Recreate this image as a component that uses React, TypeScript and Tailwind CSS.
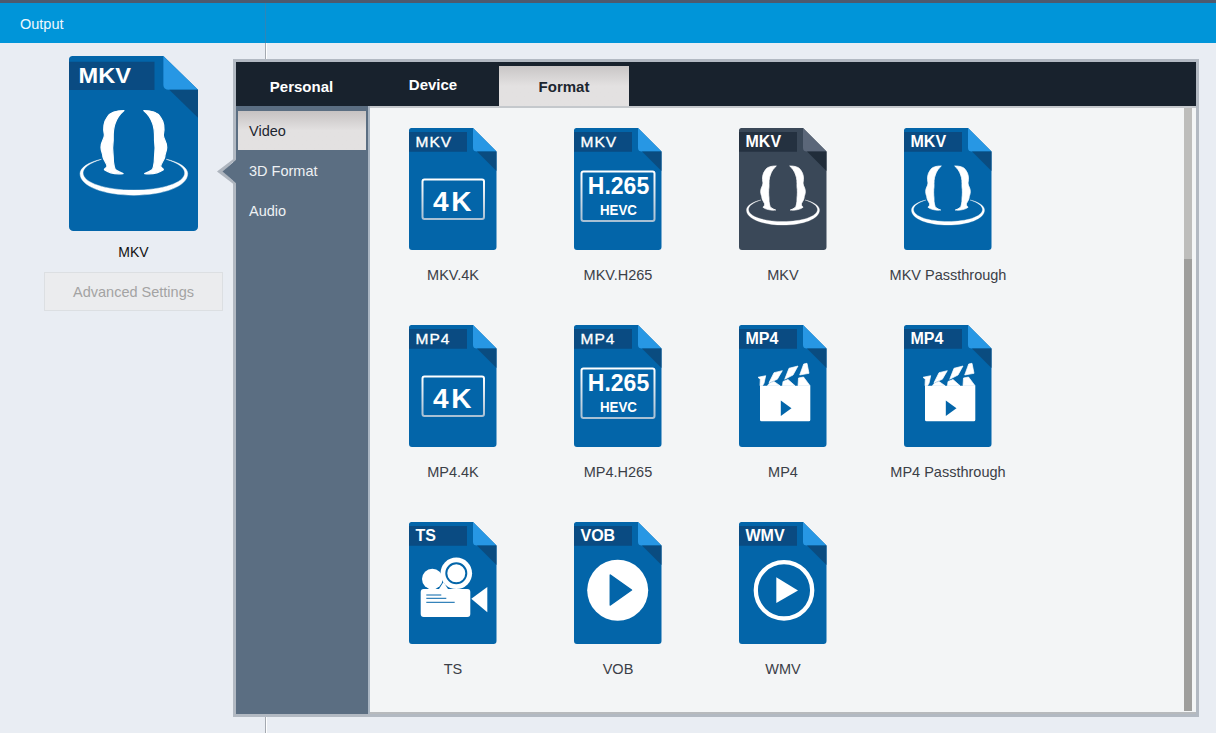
const formats = [
  { badge: 'MKV', glyph: '4k', label: 'MKV.4K', thin: true },
  { badge: 'MKV', glyph: 'h265', label: 'MKV.H265', thin: true },
  { badge: 'MKV', glyph: 'figures', label: 'MKV', dark: true },
  { badge: 'MKV', glyph: 'figures', label: 'MKV Passthrough' },
  { badge: 'MP4', glyph: '4k', label: 'MP4.4K', thin: true },
  { badge: 'MP4', glyph: 'h265', label: 'MP4.H265', thin: true },
  { badge: 'MP4', glyph: 'clapper', label: 'MP4' },
  { badge: 'MP4', glyph: 'clapper', label: 'MP4 Passthrough' },
  { badge: 'TS', glyph: 'camera', label: 'TS' },
  { badge: 'VOB', glyph: 'disc', label: 'VOB' },
  { badge: 'WMV', glyph: 'ring', label: 'WMV' },
];

const BLUE = { body: '#0365a9', badge: '#0a4b82', fold: '#2797e4', shade: '#0a4c80' };
const SLATE = { body: '#3a4858', badge: '#243140', fold: '#5b6779', shade: '#212d3a' };

const Glyph = ({ kind, fill }: { kind: string; fill: string }) => {
  if (kind === '4k') {
    return (
      <>
        <rect x="13.5" y="51.5" width="61.5" height="39.5" rx="2" fill="none" stroke="url(#box-fade)" strokeWidth="2" />
        <text x="44.5" y="82.5" textAnchor="middle" fontSize="28" fontWeight="700" letterSpacing="2.5" fill="#fff">4K</text>
      </>
    );
  }
  if (kind === 'h265') {
    return (
      <>
        <rect x="7.5" y="43.5" width="73" height="49.5" rx="2" fill="none" stroke="url(#box-fade)" strokeWidth="2" />
        <text x="44.5" y="66" textAnchor="middle" fontSize="23" fontWeight="700" fill="#fff">H.265</text>
        <text x="44.5" y="87" textAnchor="middle" fontSize="15" fontWeight="700" textLength="37" lengthAdjust="spacingAndGlyphs" fill="#fff">HEVC</text>
      </>
    );
  }
  if (kind === 'figures') {
    const half = 'M37.3 38 C32 38 28 39 26 42.5 C23.5 46 23 50 24 55 C24 58 21.5 60 21.7 63.7 C21.8 67 23 68 23 70.3 C23.5 73 26 75 25.7 77 C25 78.5 24 78.5 24 79.3 C27 81.5 32 82.5 36.7 82 C33 80.5 31 79.5 30.7 77 C30 74 30 73 30 70.3 C29.5 66 29.5 62 30 58.7 C30 54 29.8 51 31.3 47 C32.5 43 35 40 37.3 38 Z';
    return (
      <g fill="#fff" stroke="#fff" strokeWidth="0.8" strokeLinejoin="round">
        <path d={half} />
        <path d={half} transform="translate(88 0) scale(-1 1)" />
        <path d="M22 72 C13 74 7.5 78 7.5 82 C7.5 91 24 97 44 97 C64 97 80.5 91 80.5 82 C80.5 78 75 74 66 72 C74 74.5 78.5 78 78.5 81.5 C78.5 88.5 63 93.5 44 93.5 C25 93.5 9.5 88.5 9.5 81.5 C9.5 78 14 74.5 22 72 Z" strokeWidth="0.3" />
      </g>
    );
  }
  if (kind === 'clapper') {
    return (
      <>
        <g fill="#fff" stroke="#fff" strokeWidth="0.7" strokeLinejoin="round">
          <path d="M21 60.7 H71.3 V94.7 a1.5 1.5 0 0 1 -1.5 1.5 H22.5 a1.5 1.5 0 0 1 -1.5 -1.5 Z" strokeWidth="0" />
          <path d="M19 52.3 L26.7 50.7 L25 58.3 L23.5 60.7 H21 L21.3 54.3 Z" />
          <path d="M35 47.7 L43.3 45.7 L38.3 54.3 L30 57.7 Z" />
          <path d="M50 43.3 L59 41 L54 50 L45.7 54.3 Z" />
          <path d="M64.7 39 L68 38.3 L70 48.3 L60.7 50 Z" />
          <path d="M28.5 60.7 L30 58.5 L35 56.5 L41 60.7 Z" />
          <path d="M43.5 60.7 L44 56.5 L49 54.5 L56 60.7 Z" />
          <path d="M59 60.7 L59.5 53 L64.5 52 L71 60.7 Z" />
        </g>
        <path d="M41.8 75.5 L52.5 83.3 L41.8 91 Z" fill={fill} />
      </>
    );
  }
  if (kind === 'camera') {
    return (
      <>
        <circle cx="23.3" cy="57" r="10.3" fill="#fff" />
        <path d="M30 67 L34.5 60 L39 67 Z" fill="#fff" />
        <rect x="11.7" y="67" width="49.6" height="28" rx="3" fill="#fff" />
        <circle cx="47.3" cy="51.3" r="15.8" fill="#fff" />
        <circle cx="47.3" cy="51.3" r="10" fill="none" stroke={fill} strokeWidth="2" />
        <path d="M62.3 76.7 L78.3 65 V90.3 Z" fill="#fff" />
        <path d="M17.3 73 H32.3 M17.3 76.3 H37.3 M17.3 80.3 H45.7" stroke={fill} strokeWidth="1" />
      </>
    );
  }
  if (kind === 'disc') {
    return (
      <>
        <circle cx="43.7" cy="68.3" r="30.5" fill="#fff" />
        <path d="M36.3 53 L57.5 68 L36.3 83 Z" fill={fill} stroke={fill} strokeWidth="1.5" strokeLinejoin="round" />
      </>
    );
  }
  return (
    <>
      <circle cx="45" cy="68.3" r="28.2" fill="none" stroke="#fff" strokeWidth="4.3" />
      <path d="M37.3 55.3 L59 68.5 L37.3 81 Z" fill="#fff" />
    </>
  );
};

const FileIcon = ({ badge, glyph, dark, thin, className }: { badge: string; glyph: string; dark?: boolean; thin?: boolean; className: string }) => {
  const c = dark ? SLATE : BLUE;
  return (
    <svg viewBox="0 0 87.5 122" preserveAspectRatio="none" className={className}>
      <defs>
        <linearGradient id="box-fade" x1="0" y1="0" x2="0" y2="1">
          <stop offset="0" stopColor="#ffffff" />
          <stop offset="1" stopColor="#a8c0d4" />
        </linearGradient>
      </defs>
      <path d="M2.5 0 H64 L87.5 23.5 V119 a3 3 0 0 1 -3 3 H3 a3 3 0 0 1 -3 -3 V2.5 a2.5 2.5 0 0 1 2.5 -2.5 Z" fill={c.body} />
      <path d="M0 4 H58 V23.7 H0 Z" fill={c.badge} />
      <path d="M64 0 L87.5 23.5 H68 Q64 23.5 64 20 Z" fill={c.fold} />
      <path d="M68 23.5 H87.5 V43 Z" fill={c.shade} />
      <text x="6.5" y="19" fontSize={thin ? 15.5 : 16} fontWeight={thin ? 400 : 700} letterSpacing={thin ? 1 : 0} stroke={thin ? '#fff' : 'none'} strokeWidth={thin ? 0.35 : 0} fill="#fff">{badge}</text>
      <Glyph kind={glyph} fill={c.body} />
    </svg>
  );
};

export default function App() {
  return (
    <div className="relative h-[733px] w-[1216px] overflow-hidden bg-[#e9edf3] font-['Liberation_Sans',Arial,sans-serif]">
      <div className="h-[3px] bg-[#4d5a6e]" />
      <div className="h-[40px] bg-[#0095d9]">
        <div className="flex h-full w-[266px] items-center border-r border-[#2e86b8] pt-1 pl-5 text-[14.5px] text-[#eef8fd]">Output</div>
      </div>

      <div className="flex h-[690px] w-[266px] flex-col items-center border-r border-[#a4a9b0] pt-[13px] pl-[2px] shadow-[1px_0_0_#ffffff]">
        <FileIcon badge="MKV" glyph="figures" className="h-[175px] w-[129px]" />
        <div className="mt-[11px] text-sm leading-5 text-[#111]">MKV</div>
        <button className="mt-[10px] h-[39px] w-[179px] border border-[#dcdfe2] bg-[#ebecee] pt-[2px] text-[14.5px] text-[#a3a3a3]">Advanced Settings</button>
      </div>

      {/* format picker floats over the page */}
      <div className="absolute left-[233px] top-[59px] flex h-[658px] w-[966px] flex-col border-[3px] border-[#b2b9c2]">
        <svg width="20" height="32" viewBox="0 0 20 32" className="absolute left-[-19px] top-[97px]">
          <path d="M19 0 L6 12.5 L19 24.5 V27 L0 12.5 L19 -2 Z" fill="#aeb5be" />
          <path d="M20 0 L5.5 12.5 L20 25 Z" fill="#5b6e82" />
        </svg>

        <div className="flex h-[44px] shrink-0 bg-[#18222d] text-[15px] font-bold">
          <div className="flex w-[131px] items-center justify-center pt-[6px] text-white">Personal</div>
          <div className="flex w-[132px] items-center justify-center pt-[2px] text-white">Device</div>
          <div className="mt-1 flex w-[130px] items-center justify-center bg-gradient-to-b from-[#c9c6c6] via-[#e3e1e1] to-[#e3e1e1] pt-[2px] text-[#1c2630]">Format</div>
        </div>

        <div className="flex min-h-0 flex-1">
          <div className="w-[134px] shrink-0 border-r-2 border-[#aab6c3] bg-[#5b6e82] pt-[5px] text-[14.5px] text-[#eef1f4]">
            <div className="ml-[2px] flex h-[39px] w-[128px] items-center bg-gradient-to-b from-[#c6c2c2] via-[#e3e1e1] to-[#e3e1e1] pt-[2px] pl-[11px] text-[#1c2630]">Video</div>
            <div className="flex h-[41px] items-center pt-[2px] pl-[13px]">3D Format</div>
            <div className="flex h-[39px] items-center pt-[2px] pl-[13px]">Audio</div>
          </div>

          <div className="flex min-w-0 flex-1 border-y-2 border-y-[#b7babd] border-t-[#c4c8cc] bg-[#f3f5f6]">
            <div className="grid flex-1 auto-rows-[197px] grid-cols-[repeat(4,165px)] content-start pt-[20px] pl-[0.5px]">
              {formats.map((f) => (
                <div key={f.label} className="flex flex-col items-center">
                  <FileIcon badge={f.badge} glyph={f.glyph} dark={f.dark} thin={f.thin} className="h-[122px] w-[87.5px]" />
                  <div className="mt-[15px] text-[14.5px] leading-5 text-[#3b4047]">{f.label}</div>
                </div>
              ))}
            </div>
            <div className="mr-[4px] mb-px flex w-[8px] shrink-0 flex-col bg-[#bdbdbb]">
              <div className="h-[151px]" />
              <div className="flex-1 bg-[#9e9e9c]" />
            </div>
          </div>
        </div>
      </div>
    </div>
  );
}
